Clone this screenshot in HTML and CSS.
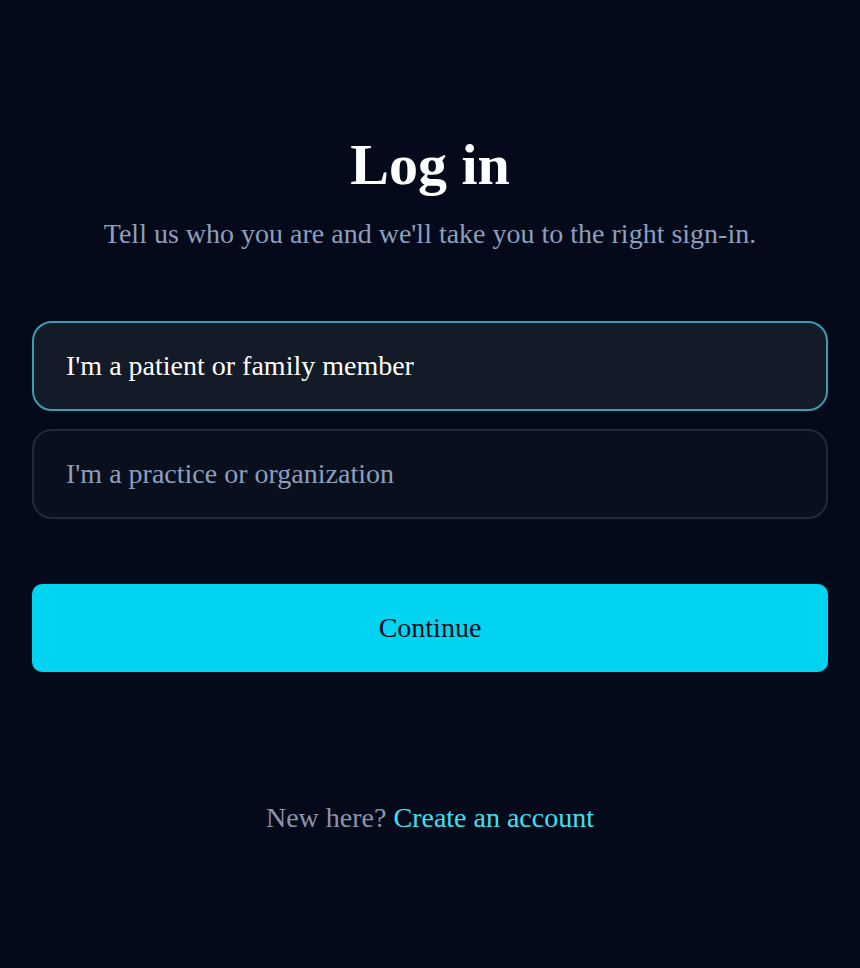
FILE: index.html
```html
<!DOCTYPE html>
<html lang="en">
<head>
<meta charset="utf-8">
<title>Log in</title>
<link rel="stylesheet" href="styles.css">
</head>
<body>
<main class="page">
  <header class="intro">
    <h1 class="title">Log in</h1>
    <p class="subtitle">Tell us who you are and we'll take you to the right sign-in.</p>
  </header>
  <div class="choices">
    <button class="choice choice--active" type="button">I'm a patient or family member</button>
    <button class="choice" type="button">I'm a practice or organization</button>
  </div>
  <button class="continue" type="button">Continue</button>
  <p class="footer">New here? <a class="footer-link" href="#">Create an account</a></p>
</main>
</body>
</html>
```
FILE: styles.css
```css
* { box-sizing: border-box; }
html, body {
  margin: 0;
  padding: 0;
  background: #050a1b;
}
body {
  font-family: "Liberation Serif", "Times New Roman", serif;
  color: #ffffff;
  min-height: 968px;
}
.page {
  padding: 130px 32px 0;
  display: flex;
  flex-direction: column;
}
.intro {
  display: flex;
  flex-direction: column;
  align-items: center;
  text-align: center;
}
.title {
  margin: 0;
  font-size: 58px;
  font-weight: 700;
  line-height: 69px;
  color: #ffffff;
}
.subtitle {
  margin: 19px 0 0;
  font-size: 28px;
  line-height: 32px;
  color: #8c9fbc;
}
.choices {
  margin-top: 71px;
  display: flex;
  flex-direction: column;
  gap: 18px;
}
.choice {
  display: flex;
  align-items: center;
  height: 90px;
  padding: 0 32px;
  border: 2px solid #222a3a;
  border-radius: 20px;
  background: #0a0f1e;
  color: #8c9fbc;
  font-family: inherit;
  font-size: 28px;
  text-align: left;
  cursor: pointer;
}
.choice--active {
  border-color: #3a9db0;
  background: #131a28;
  color: #ffffff;
}
.continue {
  margin-top: 65px;
  height: 88px;
  border: none;
  border-radius: 10px;
  background: #00d4f1;
  color: #050a1b;
  font-family: inherit;
  font-size: 28px;
  cursor: pointer;
}
.footer {
  margin: 130px 0 0;
  text-align: center;
  font-size: 28px;
  line-height: 32px;
  color: #8c95a8;
}
.footer-link {
  color: #3ee0f2;
  text-decoration: none;
}
```
